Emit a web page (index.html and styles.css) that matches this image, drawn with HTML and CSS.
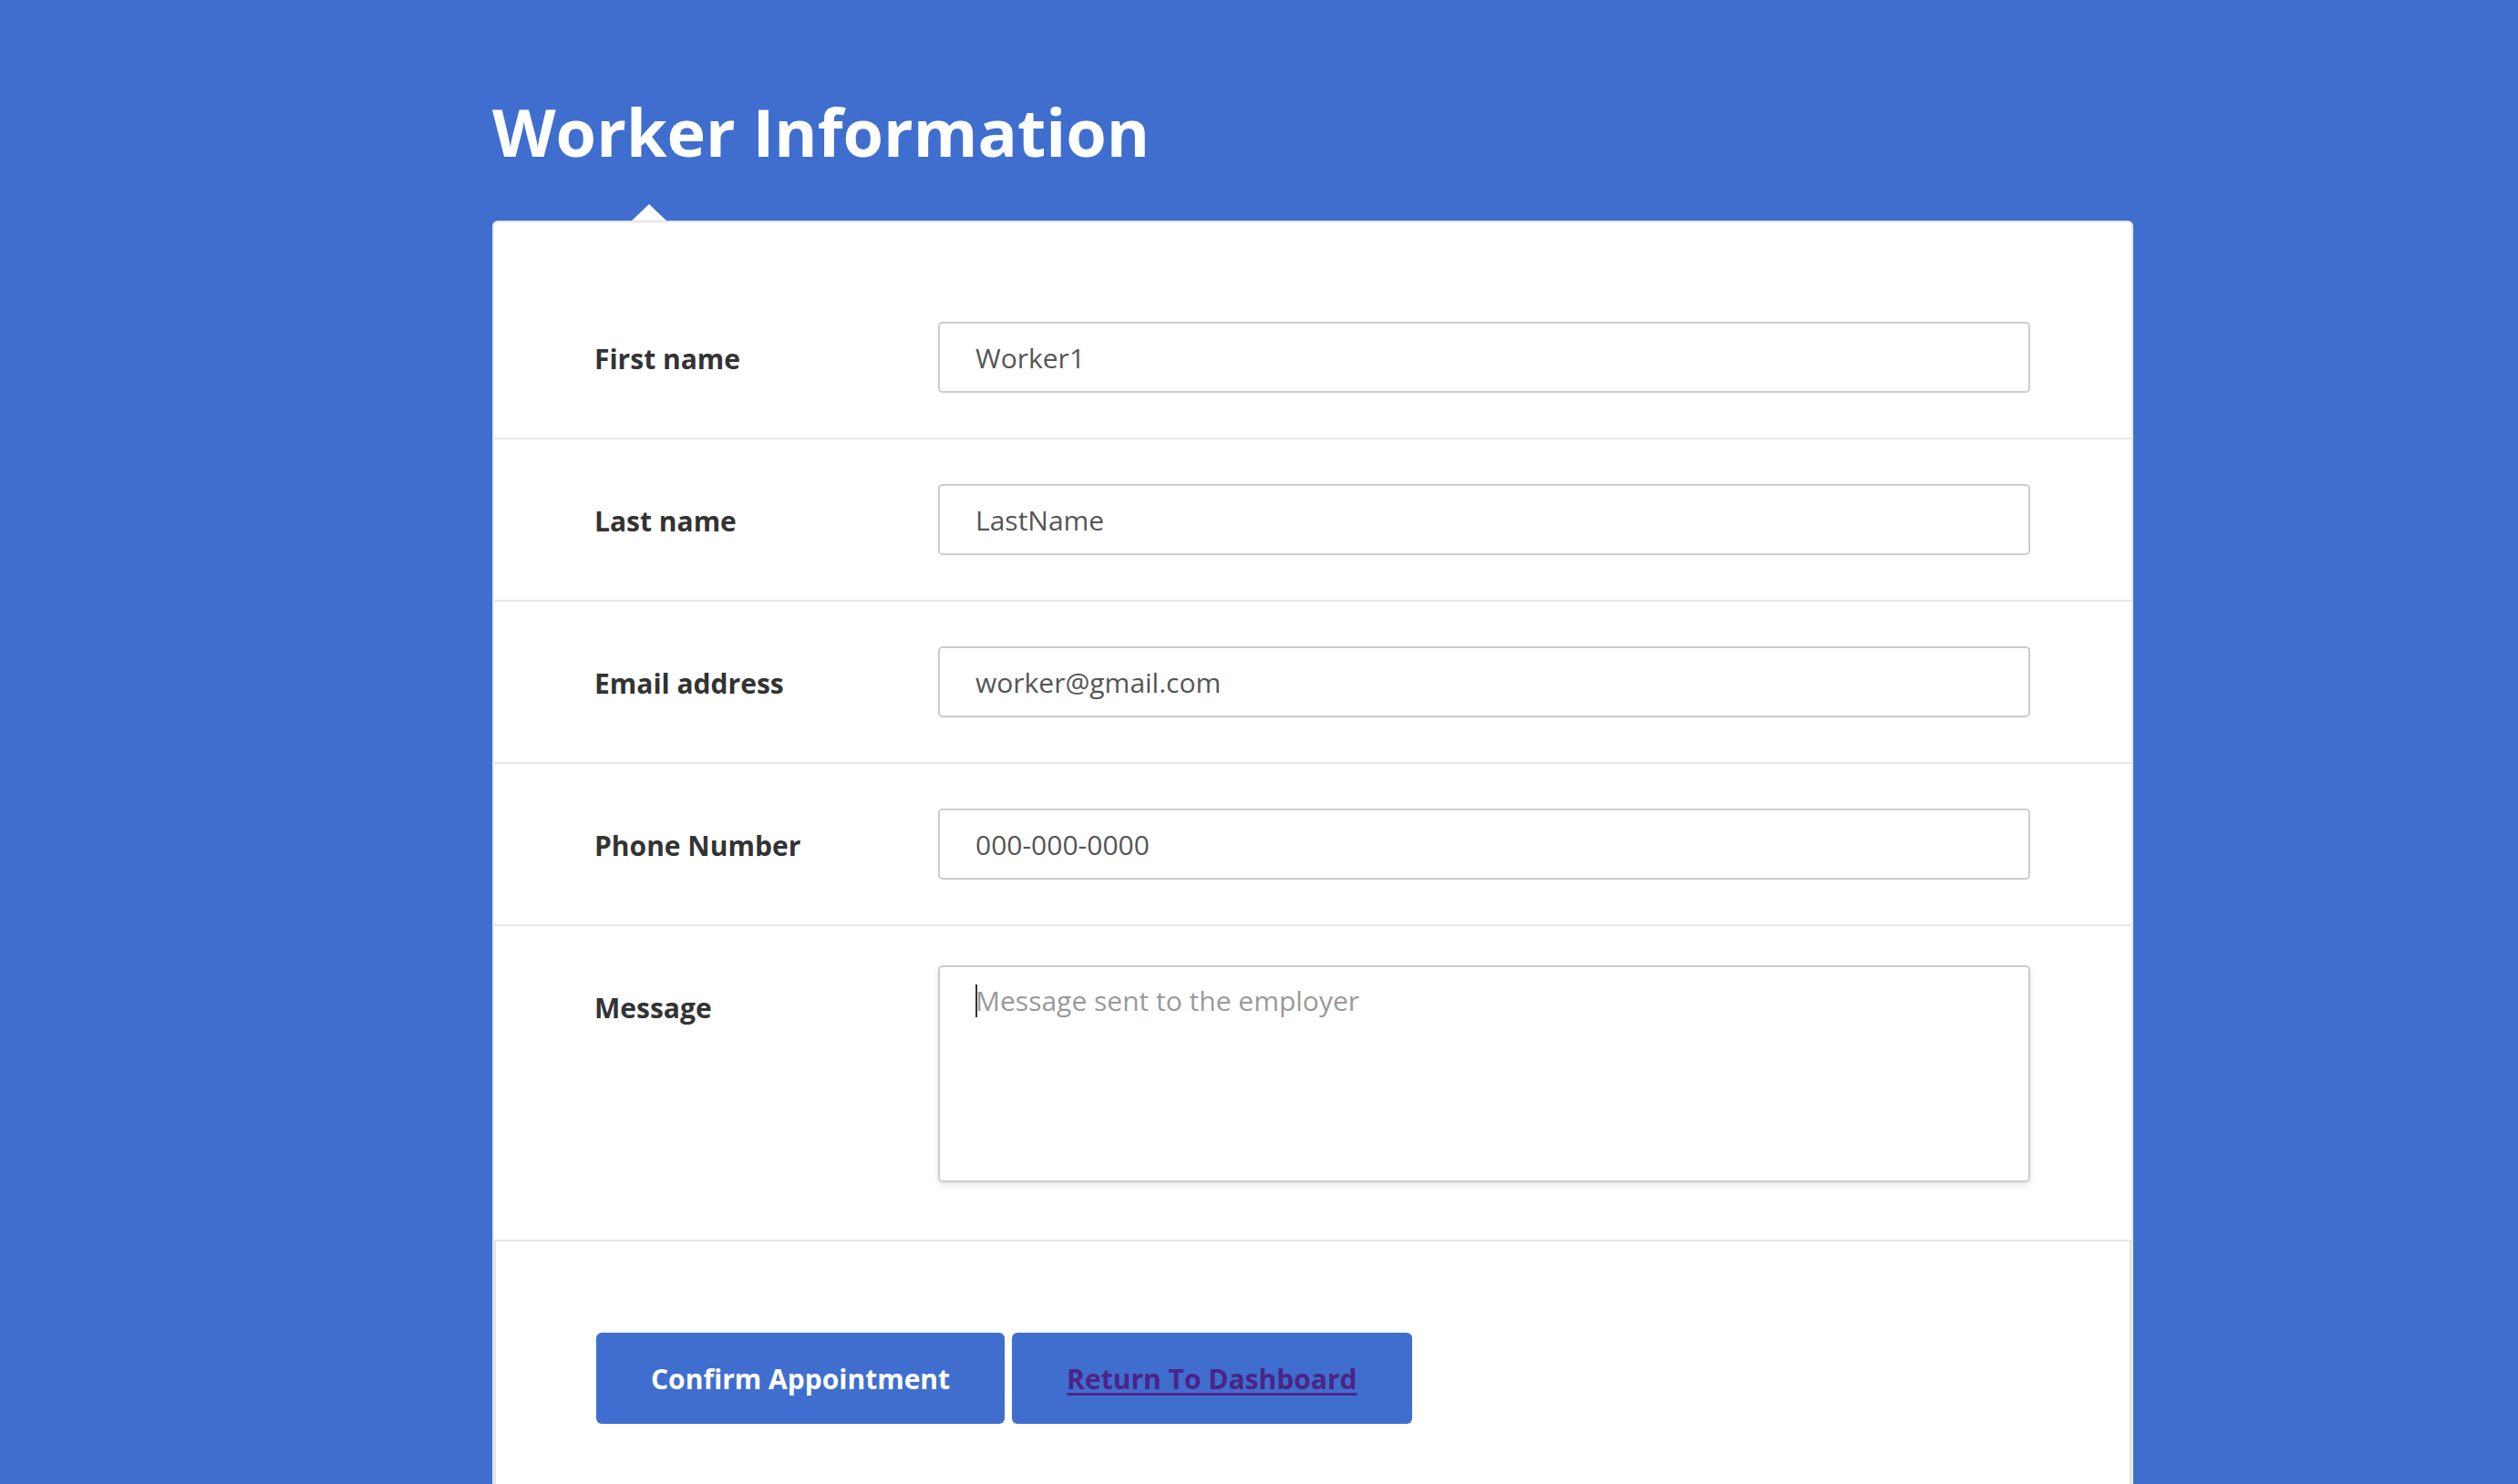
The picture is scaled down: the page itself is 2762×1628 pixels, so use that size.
FILE: index.html
```html
<!DOCTYPE html>
<html lang="en">
<head>
<meta charset="utf-8">
<title>Worker Information</title>
<link rel="stylesheet" href="styles.css">
</head>
<body>
<div class="page">
  <h1 class="title">Worker Information</h1>
  <div class="card">
    <span class="card-pointer"></span>
    <form class="form">
      <div class="row">
        <label class="label">First name</label>
        <input class="field" type="text" value="Worker1">
      </div>
      <div class="row">
        <label class="label">Last name</label>
        <input class="field" type="text" value="LastName">
      </div>
      <div class="row">
        <label class="label">Email address</label>
        <input class="field" type="text" value="worker@gmail.com">
      </div>
      <div class="row">
        <label class="label">Phone Number</label>
        <input class="field" type="text" value="000-000-0000">
      </div>
      <div class="row row-message">
        <label class="label">Message</label>
        <div class="area-wrap">
          <textarea class="area" placeholder="Message sent to the employer"></textarea>
          <span class="caret"></span>
        </div>
      </div>
    </form>
    <div class="footer">
      <button class="btn" type="button">Confirm Appointment</button>
      <a class="btn btn-link" href="#">Return To Dashboard</a>
    </div>
  </div>
</div>
</body>
</html>
```
FILE: styles.css
```css
html {
  background: #3f6ecf;
}
body {
  margin: 0;
  background: #3f6ecf;
  font-family: "Open Sans", "Noto Sans", sans-serif;
}
.page {
  margin-left: 540px;
  width: 1800px;
  padding-top: 101px;
}
.title {
  margin: 0 0 55px 0;
  font-size: 72px;
  line-height: 86px;
  font-weight: 700;
  color: #ffffff;
}
.card {
  position: relative;
  background: #ffffff;
  border: 2px solid #e6e6e6;
  border-radius: 6px;
}
.card-pointer {
  position: absolute;
  top: -20px;
  left: 151px;
  width: 0;
  height: 0;
  border-left: 19px solid transparent;
  border-right: 19px solid transparent;
  border-bottom: 18px solid #ffffff;
}
.form {
  padding-top: 60px;
}
.row {
  display: grid;
  grid-template-columns: 377px 1fr;
  align-items: start;
  padding: 49px 111px 49px 110px;
  border-bottom: 2px solid #e6e6e6;
}
.label {
  height: 78px;
  box-sizing: border-box;
  padding-top: 4px;
  font-size: 30px;
  line-height: 74px;
  font-weight: 700;
  color: #333333;
}
.field {
  box-sizing: border-box;
  height: 78px;
  width: 100%;
  margin: 0;
  padding: 0 39px;
  border: 2px solid #cccccc;
  border-radius: 5px;
  background: #ffffff;
  font-family: "Open Sans", "Noto Sans", sans-serif;
  font-size: 30px;
  color: #555555;
  outline: none;
}
.row-message {
  padding-bottom: 63px;
}
.area-wrap {
  position: relative;
  margin-top: -6px;
}
.area {
  display: block;
  box-sizing: border-box;
  width: 100%;
  height: 238px;
  margin: 0;
  padding: 16px 39px;
  border: 2px solid #cccccc;
  border-radius: 5px;
  background: #ffffff;
  box-shadow: 0 2px 6px rgba(0, 0, 0, 0.12);
  font-family: "Open Sans", "Noto Sans", sans-serif;
  font-size: 30px;
  line-height: 1.42857;
  color: #555555;
  resize: none;
  outline: none;
}
.area::placeholder {
  color: #999999;
}
.caret {
  position: absolute;
  left: 41px;
  top: 21px;
  width: 2px;
  height: 36px;
  background: #333333;
}
.footer {
  display: flex;
  gap: 8px;
  padding: 100px 110px 120px 110px;
  background: #ffffff;
  border-left: 2px solid #e6e6e6;
  border-right: 2px solid #e6e6e6;
}
.btn {
  display: inline-flex;
  align-items: center;
  box-sizing: border-box;
  height: 100px;
  padding: 0 60px;
  border: none;
  border-radius: 6px;
  background: #3f6ecf;
  color: #ffffff;
  font-family: "Open Sans", "Noto Sans", sans-serif;
  font-size: 30px;
  font-weight: 700;
  cursor: pointer;
}
.btn-link {
  color: #4b2488;
  text-decoration: underline;
  text-underline-offset: 4px;
  text-decoration-thickness: 3px;
}
```
